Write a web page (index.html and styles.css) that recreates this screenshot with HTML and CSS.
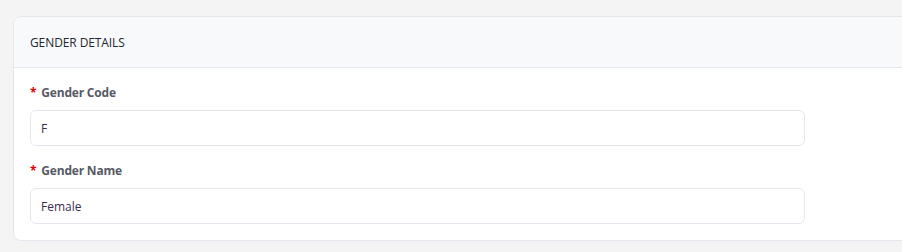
FILE: index.html
```html
<!DOCTYPE html>
<html lang="en">

<head>
    <meta charset="UTF-8">
    <meta name="viewport" content="width=device-width, initial-scale=1.0">
    <title>Gender Details</title>
    <link rel="stylesheet" href="styles.css">
</head>

<body>
    <div class="card">
        <div class="card-header">GENDER DETAILS</div>
        <div class="card-body">
            <div class="form-group">
                <label class="form-label"><span class="required">*</span>Gender Code</label>
                <input class="form-input" type="text" value="F">
            </div>
            <div class="form-group">
                <label class="form-label"><span class="required">*</span>Gender Name</label>
                <input class="form-input" type="text" value="Female">
            </div>
        </div>
    </div>
</body>

</html>
```

FILE: styles.css
```css
body {
    font-family: "Open Sans", Arial, sans-serif;
    margin: 0;
    padding: 16px 0 0 13px;
    background-color: #f4f4f5;
}

.card {
    width: 920px;
    background-color: #fff;
    border: 1px solid #e3e8ef;
    border-radius: 8px;
    overflow: hidden;
}

.card-header {
    height: 50px;
    line-height: 52px;
    padding-left: 16px;
    background-color: #f8f9fb;
    border-bottom: 1px solid #e3e8ef;
    font-size: 12px;
    letter-spacing: -0.1px;
    color: #23272e;
}

.card-body {
    padding: 16px 16px 0 16px;
}

.form-group {
    margin-bottom: 16px;
}

.form-label {
    display: block;
    font-size: 12px;
    font-weight: 700;
    letter-spacing: -0.2px;
    color: #555a64;
    margin-bottom: 9px;
}

.required {
    color: #e00000;
    margin-right: 5px;
}

.form-input {
    display: block;
    box-sizing: border-box;
    width: 775px;
    height: 36px;
    padding: 0 10px;
    border: 1px solid #e3e8ef;
    border-radius: 6px;
    font-family: "Open Sans", Arial, sans-serif;
    font-size: 12px;
    color: #3a2d50;
    outline: none;
}
```
